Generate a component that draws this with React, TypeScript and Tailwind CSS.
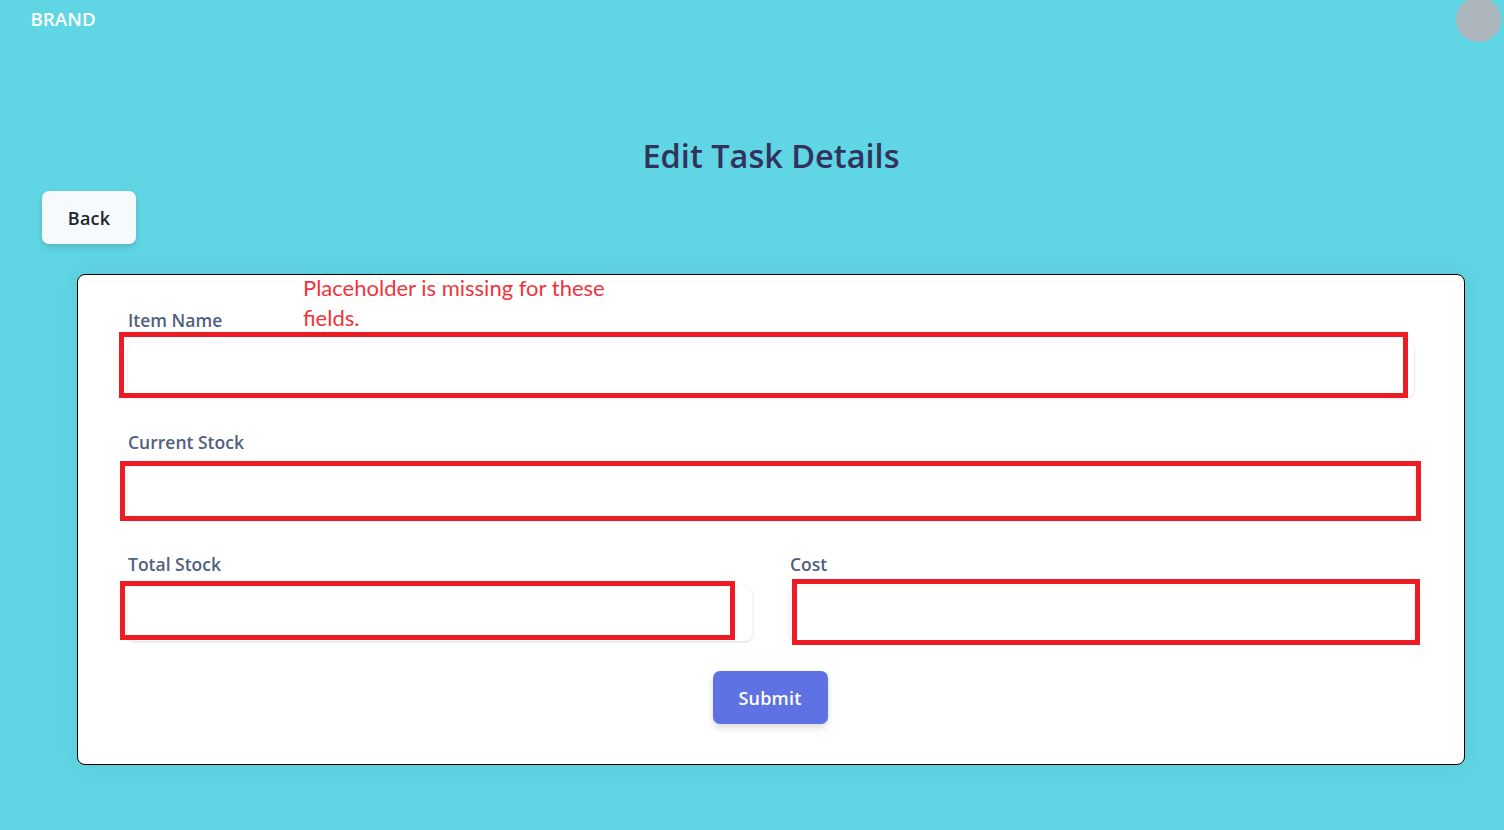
import React from "react";

const labelClass = "block h-6 text-[17.5px] leading-6 font-semibold text-[#525f7f]";
const inputClass =
  "mt-[11px] block h-[54px] w-full rounded-[7px] bg-white px-4 text-[17.5px] text-[#8898aa] outline-none shadow-[0_1px_3.75px_rgba(50,50,93,0.15),0_1px_0_rgba(0,0,0,0.02)]";
const buttonClass =
  "h-[53px] rounded-[7px] text-[18px] leading-[26px] font-semibold tracking-[0.2px] shadow-[0_5px_7.5px_rgba(50,50,93,0.11),0_1px_4px_rgba(0,0,0,0.08)]";

function Field({ id, label }: { id: string; label: string }) {
  return (
    <div className="min-w-0 flex-1">
      <label htmlFor={id} className={labelClass}>
        {label}
      </label>
      <input id={id} type="text" className={inputClass} />
    </div>
  );
}

export default function App() {
  return (
    <div className="relative flex h-[830px] w-full flex-col overflow-hidden bg-[#60d6e4] font-['Open_Sans','Noto_Sans',sans-serif]">
      <header className="flex h-[42px] items-start justify-between pr-[3px] pl-[30.5px]">
        <span className="pt-[7px] text-[18.75px] leading-6 font-semibold text-white">BRAND</span>
        <span className="-mt-[3px] h-[45px] w-[45px] rounded-full bg-[#adb5bd]" />
      </header>

      <h1 className="mt-[92px] ml-[38px] text-center text-[32.5px] leading-[44px] font-semibold text-[#32325d]">
        Edit Task Details
      </h1>

      <div className="mt-[13px] pl-[42px]">
        <button className={`${buttonClass} w-[94px] bg-[#f7fafc] text-[#212529]`}>Back</button>
      </div>

      <form className="mt-[30px] mr-[39px] ml-[77px] flex h-[491px] flex-col rounded-[8px] border border-black bg-white px-[50px] pt-[33px] shadow-[0_0_22px_rgba(50,80,100,0.12)]">
        <div className="flex">
          <Field id="item-name" label="Item Name" />
        </div>
        <div className="mt-[33px] flex">
          <Field id="current-stock" label="Current Stock" />
        </div>
        <div className="mt-[33px] flex gap-[38px]">
          <Field id="total-stock" label="Total Stock" />
          <Field id="cost" label="Cost" />
        </div>
        <button type="button" className={`${buttonClass} mt-[30px] mr-[2px] w-[115px] self-center bg-[#5e72e4] text-white`}>
          Submit
        </button>
      </form>

      <div className="pointer-events-none absolute top-[332px] left-[119px] h-[66px] w-[1289px] border-5 border-[#ed1c24]" />
      <div className="pointer-events-none absolute top-[461px] left-[120px] h-[60px] w-[1301px] border-5 border-[#ed1c24]" />
      <div className="pointer-events-none absolute top-[581px] left-[120px] h-[59px] w-[615px] border-5 border-[#ed1c24]" />
      <div className="pointer-events-none absolute top-[579px] left-[792px] h-[66px] w-[628px] border-5 border-[#ed1c24]" />
      <p className="pointer-events-none absolute top-[273px] left-[303px] w-[340px] font-['Lato','Open_Sans',sans-serif] text-[22px] leading-[29.5px] text-[#f0343c]">
        Placeholder is missing for these
        <br />
        fields.
      </p>
    </div>
  );
}
